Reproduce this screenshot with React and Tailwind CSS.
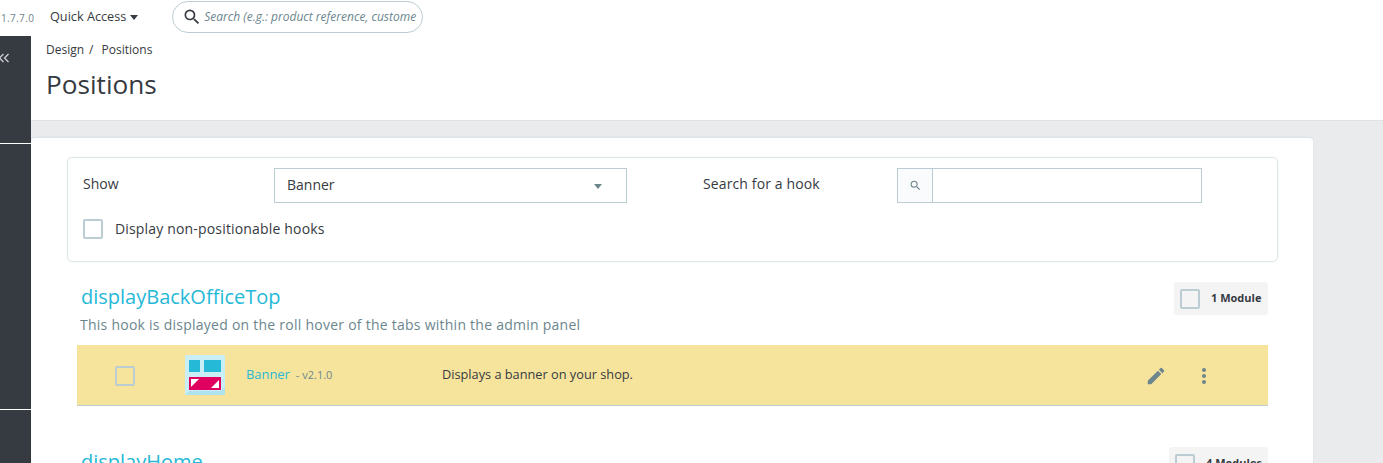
import React from "react"
import { MdEdit, MdMoreVert, MdSearch } from "react-icons/md"

const Checkbox = ({ className = "" }) => (
  <span className={"block w-5 h-5 shrink-0 rounded-[2px] border-2 border-[#bbcdd2] " + className} />
)

const BannerLogo = () => (
  <svg width="40" height="40" viewBox="0 0 40 40" className="block shrink-0">
    <rect width="40" height="40" rx="1" fill="#c9eef5" />
    <path d="M0 40 L4 36 H36 L40 32 V39 a1 1 0 0 1 -1 1 Z" fill="#aee3ee" />
    <rect x="4" y="5" width="11" height="12" fill="#25b9d7" />
    <rect x="19" y="5" width="17" height="12" fill="#25b9d7" />
    <rect x="4" y="22" width="32" height="13" fill="#e0005f" />
    <path d="M6 24 H14 L6 32 Z" fill="#fff" />
    <path d="M34 25 V33 H26 Z" fill="#fff" />
  </svg>
)

const App = () => {
  return (
    <div className="h-[463px] w-[1383px] overflow-hidden bg-white font-['Open_Sans',sans-serif] text-[#363a41]">
      {/* top bar */}
      <div className="flex h-9 items-center bg-white">
        <span className="ml-[1px] w-[49px] text-[10px] tracking-[0.35px] text-[#6c868e]">1.7.7.0</span>
        <span className="mt-[-2px] text-[12.7px] text-[#363a41]">Quick Access</span>
        <span className="ml-[4px] mt-[-1px] h-0 w-0 border-x-[4.5px] border-t-[5px] border-x-transparent border-t-[#363a41]" />
        <div className="ml-[34px] mt-[-2px] flex h-[32px] w-[251px] items-center overflow-hidden rounded-[16px] border border-[#bbcdd2] pl-[9px]">
          <MdSearch className="shrink-0 text-[20px] text-[#363a41]" />
          <span className="ml-[2px] whitespace-nowrap text-[12px] italic text-[#6c868e]">Search (e.g.: product reference, custome</span>
        </div>
      </div>

      <div className="flex h-[427px]">
        {/* collapsed sidebar */}
        <div className="w-[31px] shrink-0 bg-[#363a41]">
          <svg width="10" height="10" viewBox="0 0 10 10" fill="none" stroke="#c8ccd0" strokeWidth="1.4" className="mt-[17px] block">
            <path d="M3.5 1 L-0.5 5 L3.5 9" />
            <path d="M8.5 1 L4.5 5 L8.5 9" />
          </svg>
          <div className="mt-[80px] h-px bg-white" />
          <div className="mt-[265px] h-px bg-white" />
        </div>

        <div className="min-w-0 flex-1 bg-[#eaebec]">
          {/* page header */}
          <div className="h-[85px] border-b border-[#dfe3e4] bg-white pl-[15px]">
            <div className="pt-[5px] text-[12px] leading-[18px] text-[#363a41]">
              Design<span className="ml-[5px] mr-[5px]">/</span> Positions
            </div>
            <h1 className="mt-[8px] text-[26.2px] leading-[34px] text-[#363a41]">Positions</h1>
          </div>

          {/* card */}
          <div className="mt-[16px] h-[400px] w-[1282px] rounded-[4px] border-t border-[#dbe6e9] bg-white pl-[36px] pr-[35px] pt-[19px] shadow-[0_0_2px_rgba(0,0,0,0.08)]">
            <div className="h-[105px] rounded-[5px] border border-[#dbe6e9] shadow-[0_0_1px_rgba(0,0,0,0.08)]">
              <div className="flex items-start pl-[15px] pt-[10px]">
                <label className="w-[191px] pt-[6px] text-[14px] leading-[20px]">Show</label>
                <div className="flex h-[35px] w-[353px] items-center justify-between border border-[#bbcdd2] pb-[2px] pl-[12px] pr-[24px] text-[14px]">
                  <span>Banner</span>
                  <span className="mt-[4px] h-0 w-0 border-x-[4.5px] border-t-[5px] border-x-transparent border-t-[#6c868e]" />
                </div>
                <label className="ml-[76px] w-[194px] pt-[6px] text-[14px] leading-[20px] tracking-[0.12px]">Search for a hook</label>
                <div className="flex h-[35px] w-[305px] border border-[#bbcdd2]">
                  <div className="flex w-[35px] items-center justify-center border-r border-[#bbcdd2] bg-[#fafbfc]">
                    <MdSearch className="text-[13px] text-[#6c868e]" />
                  </div>
                </div>
              </div>
              <div className="mt-[16px] flex items-center pl-[15px]">
                <Checkbox />
                <span className="ml-[12px] text-[14px] leading-[20px] tracking-[0.17px]">Display non-positionable hooks</span>
              </div>
            </div>

            {/* hook: displayBackOfficeTop */}
            <div className="ml-[10px] mr-[10px] mt-[20px]">
              <div className="flex h-[63px] justify-between">
                <div>
                  <h2 className="pl-[4px] text-[20px] leading-[30px] text-[#25b9d7]">displayBackOfficeTop</h2>
                  <p className="mt-[3px] pl-[3px] text-[14px] leading-[20px] tracking-[0.25px] text-[#6c868e]">This hook is displayed on the roll hover of the tabs within the admin panel</p>
                </div>
                <div className="flex h-[33px] w-[94px] items-center rounded-[3px] bg-[#f4f4f4] pl-[6px]">
                  <Checkbox className="mt-[1px]" />
                  <span className="ml-[11px] text-[11px] font-bold">1 Module</span>
                </div>
              </div>
              <div className="flex h-[61px] items-center border-b border-[#bbcdd2] bg-[#f6e49d]">
                <Checkbox className="ml-[38px] mt-[1px]" />
                <span className="ml-[50px]"><BannerLogo /></span>
                <span className="ml-[21px] w-[196px] text-[12.9px] text-[#25b9d7]">
                  Banner<span className="ml-[6px] text-[11px] text-[#6c868e]">- v2.1.0</span>
                </span>
                <span className="flex-1 text-[12.75px] text-[#363a41]">Displays a banner on your shop.</span>
                <MdEdit className="mr-[1px] mt-[1px] text-[22px] text-[#6c868e]" />
                <MdMoreVert className="ml-[24px] mr-[52px] mt-[1px] text-[24px] text-[#6c868e]" />
              </div>
            </div>

            {/* hook: displayHome */}
            <div className="ml-[10px] mr-[10px] mt-[41px] flex justify-between">
              <h2 className="pl-[4px] text-[20px] leading-[30px] text-[#25b9d7]">displayHome</h2>
              <div className="flex h-[33px] w-[99px] items-center rounded-[3px] bg-[#f4f4f4] pl-[6px]">
                <Checkbox />
                <span className="ml-[11px] text-[11px] font-bold">4 Modules</span>
              </div>
            </div>
          </div>
        </div>
      </div>
    </div>
  )
}

export default App
